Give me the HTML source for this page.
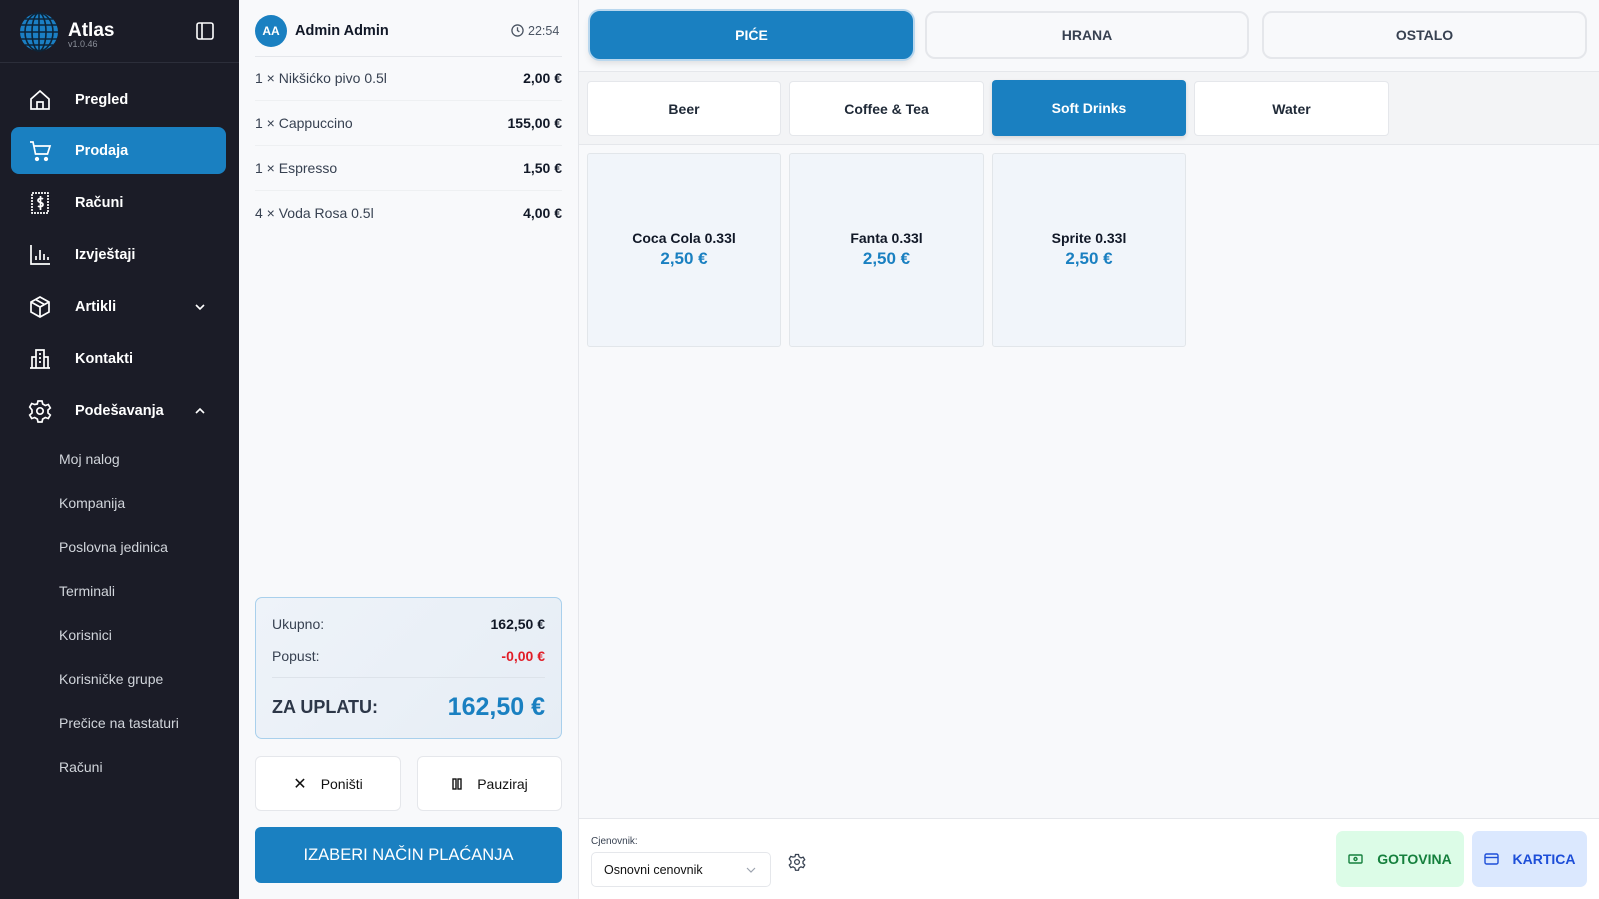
<!DOCTYPE html>
<html><head><meta charset="utf-8"><style>
*{box-sizing:border-box;margin:0;padding:0}
body{width:1599px;height:899px;overflow:hidden;font-family:"Liberation Sans",sans-serif;background:#f8f9fb;position:relative;color:#111827}
.abs{position:absolute}
#sb{left:0;top:0;width:239px;height:899px;background:#1b1c27;color:#fff}
.ni{position:absolute;left:11px;width:215px;height:47px;border-radius:8px;font-size:14.5px;font-weight:bold;display:flex;align-items:center}
.ni svg{position:absolute;left:17px}
.ni span{position:absolute;left:64px}
.sub{position:absolute;left:59px;font-size:14px;color:#d1d5db}
.line{position:absolute;height:1px;background:#e5e7eb}
.row{position:absolute;left:255px;width:307px;font-size:14px;color:#374151;display:flex;justify-content:space-between}
.row b{color:#111827}
.btn{position:absolute;border:1px solid #e5e7eb;background:#fff;border-radius:6px;display:flex;align-items:center;justify-content:center;font-size:14px;font-weight:bold;color:#1f2937}
.tab{position:absolute;top:11px;height:48px;border:2px solid #e5e7eb;border-radius:10px;display:flex;align-items:center;justify-content:center;font-size:14px;font-weight:bold;color:#374151}
.card{position:absolute;top:153px;height:194px;width:194px;background:#f1f5fa;border:1px solid #e2e6ea;border-radius:3px;text-align:center;padding-top:76px;font-size:14px;font-weight:bold}
.card div{color:#1a80c1;font-size:17px;margin-top:3px}
</style></head><body>
<div id="sb" class="abs">
 <svg class="abs" style="left:19px;top:12px" width="40" height="40" viewBox="0 0 40 40"><circle cx="20" cy="20" r="19" fill="#1b7fc4"/><g stroke="#0d2438" stroke-width="1.6" fill="none"><ellipse cx="20" cy="20" rx="7" ry="19"/><ellipse cx="20" cy="20" rx="14" ry="19"/><line x1="20" y1="1" x2="20" y2="39"/><line x1="2" y1="13" x2="38" y2="13"/><line x1="1" y1="20" x2="39" y2="20"/><line x1="2" y1="27" x2="38" y2="27"/><line x1="6" y1="7" x2="34" y2="7"/><line x1="6" y1="33" x2="34" y2="33"/></g></svg>
 <div class="abs" style="left:68px;top:20px;font-size:19px;font-weight:bold">Atlas</div>
 <div class="abs" style="left:68px;top:39px;font-size:9px;color:#8b8f99">v1.0.46</div>
 <svg class="abs" style="left:196px;top:22px" width="18" height="18" viewBox="0 0 18 18" fill="none" stroke="#fff" stroke-width="1.6"><rect x="1" y="1" width="16" height="16" rx="2"/><line x1="6" y1="1" x2="6" y2="17"/></svg>
 <div class="abs" style="left:0;top:62px;width:239px;height:1px;background:#2c2e3a"></div>
 <div class="ni" style="top:76px"><svg width="24" height="24" viewBox="0 0 24 24" fill="none" stroke="#fff" stroke-width="1.7"><path d="M3 11L12 3l9 8v10H3z M9 21v-7h6v7"/></svg><span>Pregled</span></div>
 <div class="ni" style="top:127px;background:#1a80c1"><svg width="24" height="24" viewBox="0 0 24 24" fill="none" stroke="#fff" stroke-width="1.7"><path d="M2 3h3l2.5 12h12L22 7H6"/><circle cx="9" cy="20" r="1.3" fill="#fff"/><circle cx="18" cy="20" r="1.3" fill="#fff"/></svg><span>Prodaja</span></div>
 <div class="ni" style="top:179px"><svg width="24" height="24" viewBox="0 0 24 24" fill="none" stroke="#fff" stroke-width="1.7"><rect x="4" y="2" width="16" height="20" stroke-dasharray="2 1"/><path d="M15 8c-1-1-5-1-5 1.5s5 1.5 5 4-4 2.5-5 1.5M12.5 5v14"/></svg><span>Računi</span></div>
 <div class="ni" style="top:231px"><svg width="24" height="24" viewBox="0 0 24 24" fill="none" stroke="#fff" stroke-width="1.7"><path d="M3 2v19h19M8 17v-4M12 17V7M16 17v-6M20 17v-3"/></svg><span>Izvještaji</span></div>
 <div class="ni" style="top:283px"><svg width="24" height="24" viewBox="0 0 24 24" fill="none" stroke="#fff" stroke-width="1.7"><path d="M12 2l9 5v10l-9 5-9-5V7z M3 7l9 5 9-5M12 12v10M7.5 4.5l9 5"/></svg><span>Artikli</span><svg style="left:183px" width="12" height="12" viewBox="0 0 12 12" fill="none" stroke="#fff" stroke-width="1.6"><path d="M2 4l4 4 4-4"/></svg></div>
 <div class="ni" style="top:335px"><svg width="24" height="24" viewBox="0 0 24 24" fill="none" stroke="#fff" stroke-width="1.7"><path d="M8 21V3h8v18M4 21V10h4M16 10h4v11M2 21h20M11 7h2M11 11h2M11 15h2"/></svg><span>Kontakti</span></div>
 <div class="ni" style="top:387px"><svg width="24" height="24" viewBox="0 0 24 24" fill="none" stroke="#fff" stroke-width="1.7"><path d="M10 2h4l.7 3 2.6 1.5 3-1 2 3.5-2.3 2v3l2.3 2-2 3.5-3-1-2.6 1.5-.7 3h-4l-.7-3-2.6-1.5-3 1-2-3.5 2.3-2v-3L1.7 8l2-3.5 3 1L9.3 5z"/><circle cx="12" cy="12" r="3.2"/></svg><span>Podešavanja</span><svg style="left:183px" width="12" height="12" viewBox="0 0 12 12" fill="none" stroke="#fff" stroke-width="1.6"><path d="M2 8l4-4 4 4"/></svg></div>
 <div class="sub" style="top:451px">Moj nalog</div>
 <div class="sub" style="top:495px">Kompanija</div>
 <div class="sub" style="top:539px">Poslovna jedinica</div>
 <div class="sub" style="top:583px">Terminali</div>
 <div class="sub" style="top:627px">Korisnici</div>
 <div class="sub" style="top:671px">Korisničke grupe</div>
 <div class="sub" style="top:715px">Prečice na tastaturi</div>
 <div class="sub" style="top:759px">Računi</div>
</div>

<div class="abs" style="left:578px;top:0;width:1px;height:899px;background:#e5e7eb"></div>
<div class="abs" style="left:255px;top:15px;width:32px;height:32px;border-radius:50%;background:#1a80c1;color:#fff;font-size:12px;font-weight:bold;text-align:center;line-height:32px">AA</div>
<div class="abs" style="left:295px;top:23px;font-size:14.5px;font-weight:bold">Admin Admin</div>
<svg class="abs" style="left:511px;top:24px" width="13" height="13" viewBox="0 0 14 14" fill="none" stroke="#4b5563" stroke-width="1.4"><circle cx="7" cy="7" r="6"/><path d="M7 3.5V7l2 1.5"/></svg>
<div class="abs" style="left:528px;top:24px;font-size:12.5px;color:#4b5563">22:54</div>
<div class="line" style="left:255px;top:56px;width:307px"></div>
<div class="row" style="top:70px"><span>1 × Nikšićko pivo 0.5l</span><b>2,00 €</b></div>
<div class="line" style="left:255px;top:100px;width:307px;background:#eef0f2"></div>
<div class="row" style="top:115px"><span>1 × Cappuccino</span><b>155,00 €</b></div>
<div class="line" style="left:255px;top:145px;width:307px;background:#eef0f2"></div>
<div class="row" style="top:160px"><span>1 × Espresso</span><b>1,50 €</b></div>
<div class="line" style="left:255px;top:190px;width:307px;background:#eef0f2"></div>
<div class="row" style="top:205px"><span>4 × Voda Rosa 0.5l</span><b>4,00 €</b></div>

<div class="abs" style="left:255px;top:597px;width:307px;height:142px;border:1px solid #a9d0ec;border-radius:7px;background:linear-gradient(135deg,#eef3f9,#e6edf5)"></div>
<div class="row" style="left:272px;width:273px;top:616px"><span>Ukupno:</span><b>162,50 €</b></div>
<div class="row" style="left:272px;width:273px;top:648px"><span>Popust:</span><b style="color:#e11d27">-0,00 €</b></div>
<div class="line" style="left:272px;top:677px;width:273px;background:#dde3ea"></div>
<div class="row" style="left:272px;width:273px;top:693px;align-items:center"><span style="font-size:18px;font-weight:bold;color:#2d3748">ZA UPLATU:</span><b style="font-size:25px;color:#1a80c1">162,50 €</b></div>

<div class="btn" style="left:255px;top:756px;width:146px;height:55px;font-weight:normal;color:#111"><span style="font-size:16px;margin-right:14px">✕</span>Poništi</div>
<div class="btn" style="left:417px;top:756px;width:145px;height:55px;font-weight:normal;color:#111"><svg width="12" height="12" style="margin-right:14px" viewBox="0 0 12 12" fill="none" stroke="#111" stroke-width="1.4"><rect x="2" y="1" width="3" height="10"/><rect x="7" y="1" width="3" height="10"/></svg>Pauziraj</div>
<div class="btn" style="left:255px;top:827px;width:307px;height:56px;background:#1a80c1;border:none;color:#fff;font-size:16.5px;font-weight:normal">IZABERI NAČIN PLAĆANJA</div>

<div class="tab" style="left:590px;width:323px;background:#1a80c1;border-color:#1a80c1;color:#fff;box-shadow:0 0 0 2px #b9d7ee,0 4px 8px rgba(0,0,0,.12)">PIĆE</div>
<div class="tab" style="left:925px;width:324px">HRANA</div>
<div class="tab" style="left:1262px;width:325px">OSTALO</div>
<div class="abs" style="left:579px;top:71px;width:1020px;height:74px;background:#f3f4f6;border-top:1px solid #e5e7eb;border-bottom:1px solid #e5e7eb"></div>
<div class="btn" style="left:587px;top:81px;width:194px;height:55px;border-radius:4px">Beer</div>
<div class="btn" style="left:789px;top:81px;width:195px;height:55px;border-radius:4px">Coffee &amp; Tea</div>
<div class="btn" style="left:992px;top:80px;width:194px;height:56px;border-radius:4px;background:#1a80c1;border:none;color:#fff;box-shadow:0 2px 4px rgba(0,0,0,.12)">Soft Drinks</div>
<div class="btn" style="left:1194px;top:81px;width:195px;height:55px;border-radius:4px">Water</div>
<div class="card" style="left:587px">Coca Cola 0.33l<div>2,50 €</div></div>
<div class="card" style="left:789px;width:195px">Fanta 0.33l<div>2,50 €</div></div>
<div class="card" style="left:992px">Sprite 0.33l<div>2,50 €</div></div>

<div class="abs" style="left:579px;top:818px;width:1020px;height:81px;background:#fff;border-top:1px solid #e5e7eb"></div>
<div class="abs" style="left:591px;top:836px;font-size:10px;color:#374151">Cjenovnik:</div>
<div class="abs" style="left:591px;top:852px;width:180px;height:35px;border:1px solid #e5e7eb;border-radius:5px;font-size:12.5px;padding:10px 12px;color:#111">Osnovni cenovnik<svg class="abs" style="right:14px;top:14px" width="10" height="7" viewBox="0 0 10 7" fill="none" stroke="#9ca3af" stroke-width="1.2"><path d="M1 1l4 4 4-4"/></svg></div>
<svg class="abs" style="left:788px;top:853px" width="18" height="18" viewBox="0 0 24 24" fill="none" stroke="#374151" stroke-width="1.7"><path d="M10 2h4l.7 3 2.6 1.5 3-1 2 3.5-2.3 2v3l2.3 2-2 3.5-3-1-2.6 1.5-.7 3h-4l-.7-3-2.6-1.5-3 1-2-3.5 2.3-2v-3L1.7 8l2-3.5 3 1L9.3 5z"/><circle cx="12" cy="12" r="3.2"/></svg>
<div class="btn" style="left:1336px;top:831px;width:128px;height:56px;background:#dcfce7;border:none;color:#15803d;border-radius:7px"><svg width="15" height="10" style="margin-right:14px" viewBox="0 0 15 10" fill="none" stroke="#15803d" stroke-width="1.4"><rect x="1" y="1" width="13" height="8" rx="1"/><circle cx="7.5" cy="5" r="1.5"/></svg>GOTOVINA</div>
<div class="btn" style="left:1472px;top:831px;width:115px;height:56px;background:#dbe8fe;border:none;color:#1d4ed8;border-radius:7px"><svg width="15" height="12" style="margin-right:14px" viewBox="0 0 15 12" fill="none" stroke="#1d4ed8" stroke-width="1.4"><rect x="1" y="1" width="13" height="10" rx="1.5"/><line x1="1" y1="4.5" x2="14" y2="4.5"/></svg>KARTICA</div>
</body></html>
